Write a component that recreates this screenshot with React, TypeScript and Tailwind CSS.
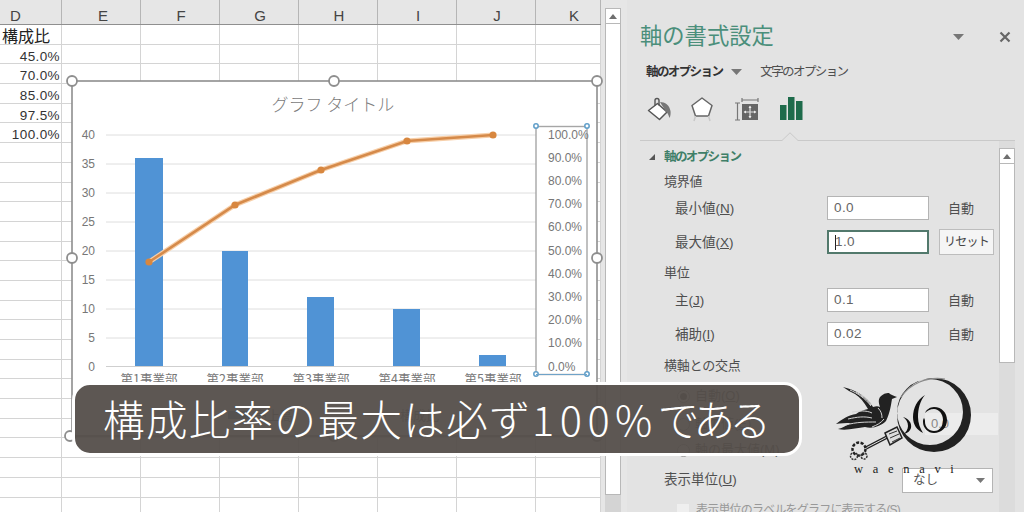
import React from "react";

const FONT = "font-['Liberation_Sans','Noto_Sans_CJK_JP',sans-serif]";
const JP = "font-['Noto_Sans_CJK_JP',sans-serif]";

const cols = [
  { l: "D", w: "w-[62px]", h: "justify-start pl-[10px]" },
  { l: "E", w: "w-[79px]", h: "justify-center pl-[4px]" },
  { l: "F", w: "w-[79px]", h: "justify-center pl-[2px]" },
  { l: "G", w: "w-[79px]", h: "justify-center pl-[2px]" },
  { l: "H", w: "w-[79px]", h: "justify-center pl-[2px]" },
  { l: "I", w: "w-[79px]", h: "justify-center pl-[2px]" },
  { l: "J", w: "w-[79px]", h: "justify-center pl-[2px]" },
  { l: "K", w: "w-[65px]", h: "justify-center pl-[12px]" },
];
const dVals = ["構成比", "45.0%", "70.0%", "85.0%", "97.5%", "100.0%"];
const rows = Array.from({ length: 25 }, (_, i) => i);

function Sheet() {
  return (
    <div className="flex h-full w-[601px] flex-col bg-white">
      <div className="flex h-[25px] shrink-0 border-b border-[#8f8f8f] bg-[#e6e6e6]">
        {cols.map((c) => (
          <div key={c.l} className={`${c.w} ${c.h} flex items-center border-r border-[#b5b5b5] pt-[7px] text-[15px] leading-none text-[#444]`}>
            {c.l}
          </div>
        ))}
      </div>
      {rows.map((r) => (
        <div key={r} className="flex h-[19.7px] shrink-0 border-b border-[#d4d4d4]">
          {cols.map((c, i) => (
            <div key={c.l} className={`${c.w} border-r border-[#d4d4d4] pt-[2px] leading-[19px] ${i === 0 ? "pr-[1px]" : ""}`}>
              {i === 0 && r < 6 ? (
                r === 0 ? (
                  <span className="block whitespace-nowrap pl-[2px] text-[16px] text-[#222]">{dVals[r]}</span>
                ) : (
                  <span className="block text-right text-[13.5px] tracking-[0.4px] text-[#333]">{dVals[r]}</span>
                )
              ) : null}
            </div>
          ))}
        </div>
      ))}
    </div>
  );
}

function Handle({ x, y }: { x: number; y: number }) {
  return <circle cx={x} cy={y} r={5} fill="#fff" stroke="#8e8e8e" strokeWidth={1.8} />;
}

function Chart() {
  const grid = [135, 164, 193, 222, 251, 280, 309, 338];
  const bars = [
    [135, 28, 158],
    [222, 26, 251],
    [307, 27, 297],
    [393, 27, 309],
    [479, 27, 355],
  ];
  const pts = [
    [149, 262],
    [235, 205],
    [321, 170],
    [407, 141],
    [493, 135],
  ];
  const line = pts.map((p) => p.join(",")).join(" ");
  const left = ["40", "35", "30", "25", "20", "15", "10", "5", "0"];
  const right = ["100.0%", "90.0%", "80.0%", "70.0%", "60.0%", "50.0%", "40.0%", "30.0%", "20.0%", "10.0%", "0.0%"];
  return (
    <svg className="absolute left-0 top-0" width="1024" height="512" viewBox="0 0 1024 512">
      <rect x="72" y="81" width="525" height="355" fill="#fff" stroke="#8e8e8e" strokeWidth="1.6" />
      <text x="333" y="111" textAnchor="middle" fontSize="17" fill="#7b7b7b" fontFamily="Noto Sans CJK JP, sans-serif" fontWeight="300">
        グラフ タイトル
      </text>
      {grid.map((y) => (
        <line key={y} x1="106" x2="536" y1={y} y2={y} stroke="#dedede" strokeWidth="1" />
      ))}
      <line x1="106" x2="536" y1="366.5" y2="366.5" stroke="#cfcfcf" />
      {bars.map(([x, w, t]) => (
        <rect key={x} x={x} y={t} width={w} height={366 - t} fill="#5093d5" />
      ))}
      <polyline points={line} fill="none" stroke="#f7cfa9" strokeWidth="5" />
      <polyline points={line} fill="none" stroke="#d58a4a" strokeWidth="2.6" />
      {pts.map(([x, y]) => (
        <circle key={x} cx={x} cy={y} r="3.6" fill="#d8873f" />
      ))}
      {left.map((t, i) => (
        <text key={t} x="95" y={139 + i * 29} textAnchor="end" fontSize="12" fill="#777" fontFamily="Liberation Sans, sans-serif">
          {t}
        </text>
      ))}
      <rect x="536" y="126.5" width="51" height="248" fill="#fff" stroke="#a6a6a6" strokeWidth="1.4" />
      {right.map((t, i) => (
        <text key={t} x={548} y={138.5 + i * 23.2} fontSize="12" fill="#777" fontFamily="Liberation Sans, sans-serif">
          {t}
        </text>
      ))}
      {[
        [536, 126],
        [587, 126],
        [536, 374],
        [587, 374],
      ].map(([x, y]) => (
        <circle key={x + "-" + y} cx={x} cy={y} r="2.2" fill="#fff" stroke="#5f9ec9" strokeWidth="1.5" />
      ))}
      <line x1="536" x2="587" y1="374.5" y2="374.5" stroke="#6fa3c9" strokeWidth="1.2" />
      {[149, 235, 321, 407, 493].map((x, i) => (
        <text key={x} x={x} y="384" fontSize="12.5" fill="#777" textAnchor="middle" fontFamily="Noto Sans CJK JP, sans-serif">
          第{i + 1}事業部
        </text>
      ))}
      <rect x="228" y="411" width="22" height="8" fill="#4e82b8" />
      <text x="254" y="420" fontSize="13" fill="#666" fontFamily="Noto Sans CJK JP, sans-serif">売上高</text>
      <line x1="365" x2="395" y1="415" y2="415" stroke="#d58a4a" strokeWidth="2.5" />
      <text x="400" y="420" fontSize="13" fill="#666" fontFamily="Noto Sans CJK JP, sans-serif">構成比</text>
      <Handle x={72} y={81} />
      <Handle x={334} y={81} />
      <Handle x={597} y={81} />
      <Handle x={72} y={258} />
      <Handle x={597} y={258} />
      <Handle x={70} y={436} />
      <Handle x={334} y={436} />
      <Handle x={597} y={436} />
    </svg>
  );
}

function UpButton() {
  return (
    <div className="flex h-[16px] w-[16px] shrink-0 items-center justify-center border border-[#b8b8b8] bg-white">
      <svg width="8" height="5" viewBox="0 0 8 5">
        <path d="M4 0 8 5H0z" fill="#6f6f6f" />
      </svg>
    </div>
  );
}

function SheetScroll() {
  return (
    <div className="ml-[4px] flex h-full w-[17px] shrink-0 flex-col">
      <div className="h-[8px] shrink-0" />
      <UpButton />
      <div className="h-[471px] w-[16px] shrink-0 border-x border-b border-[#b8b8b8] bg-white" />
      <div className="w-[16px] flex-1 bg-[#d4d4d4]" />
    </div>
  );
}

function PaintIcon() {
  return (
    <svg width="26" height="26" viewBox="0 0 26 26">
      <path d="M11.5 7.5 21 16l-7.5 7.5L2.5 14.5z" fill="#fff" stroke="#555" strokeWidth="1.5" strokeLinejoin="round" />
      <path d="M9 9.5V4.5a2 2 0 0 1 4 0v5" fill="none" stroke="#555" strokeWidth="1.4" />
      <path d="M14 6c5 0 9.500 3 10.500 9 .3 2.500 0 5-1 7-1-3-1.500-5-4-7z" fill="#777" />
    </svg>
  );
}

function PentagonIcon() {
  return (
    <svg width="24" height="26" viewBox="0 0 24 26">
      <path d="M12 2 22 9.500 18.500 20H5.500L2 9.500z" fill="#fff" stroke="#666" strokeWidth="1.5" strokeLinejoin="round" />
      <path d="M5.500 20 4 25M18.500 20 20 25" stroke="#c8c8c8" strokeWidth="1.500" fill="none" />
    </svg>
  );
}

function SizeIcon() {
  return (
    <svg width="25" height="26" viewBox="0 0 25 26">
      <path d="M8 2V6M24 2V6M8 4H24M1 7H6M3.500 7V24M1 24H6" stroke="#777" strokeWidth="1.2" fill="none" />
      <rect x="8" y="8" width="16" height="16" fill="#666" />
      <path d="M16 10.500V21.500M10.500 16H21.500" stroke="#ddd" strokeWidth="1.200" />
      <path d="M16 9.500 14.500 12H17.500zM16 22.500 14.500 20H17.500zM9.500 16 12 14.500V17.500zM22.500 16 20 14.500V17.500z" fill="#eee" />
    </svg>
  );
}

function BarsIcon() {
  return (
    <svg width="23" height="24" viewBox="0 0 23 24">
      <rect x="0" y="8" width="6.500" height="15" fill="#1e6b4b" />
      <rect x="8" y="0" width="6.500" height="23" fill="#1e6b4b" />
      <rect x="16" y="4" width="6.500" height="19" fill="#1e6b4b" />
    </svg>
  );
}

function Field({ v, focus }: { v: string; focus?: boolean }) {
  return (
    <div className={`flex h-[24px] w-[102px] shrink-0 items-center bg-white pl-[6px] text-[13.5px] tracking-[0.4px] text-[#666] ${focus ? "border-2 border-[#52796c]" : "border border-[#b4b4b4]"}`}>
      {focus ? <span className="mr-[-1px] h-[15px] w-[1px] bg-[#222]" /> : null}
      {v}
    </div>
  );
}

function UL({ c }: { c: string }) {
  return <span className="underline">{c}</span>;
}

function ValRow({ label, v, mt, focus, reset }: { label: React.ReactNode; v: string; mt: string; focus?: boolean; reset?: boolean }) {
  return (
    <div className={`flex h-[24px] items-center pl-[48px] ${mt}`}>
      <div className="w-[152px] shrink-0 pt-[2px] text-[13.5px] text-[#4f4f4f]">{label}</div>
      <Field v={v} focus={focus} />
      {reset ? (
        <div className="ml-[10px] flex h-[26px] w-[55px] shrink-0 items-center justify-center border border-[#bdbdbd] bg-[#f5f5f5] text-[12px] tracking-[-0.8px] text-[#444]">リセット</div>
      ) : (
        <div className="ml-[19px] pt-[2px] text-[13px] text-[#4f4f4f]">自動</div>
      )}
    </div>
  );
}

function Heading({ t, mt }: { t: string; mt: string }) {
  return <div className={`h-[20px] pl-[37px] text-[13px] leading-[22px] tracking-[-0.2px] text-[#4f4f4f] ${mt}`}>{t}</div>;
}

function Radio({ on }: { on?: boolean }) {
  return (
    <span className="flex h-[13px] w-[13px] shrink-0 items-center justify-center rounded-full border border-[#999] bg-white">
      {on ? <span className="h-[7px] w-[7px] rounded-full bg-[#555]" /> : null}
    </span>
  );
}

function Panel() {
  return (
    <div className="relative ml-[5px] flex h-full flex-1 flex-col bg-[#e3e3e3]">
      <div className="mt-[22px] flex h-[30px] items-center pl-[13px] pr-[13px]">
        <div className="flex-1 text-[22.3px] leading-[30px] text-[#4b8f7b]">軸の書式設定</div>
        <svg className="mr-[35px]" width="11" height="6" viewBox="0 0 11 6">
          <path d="M0 0H11L5.500 6z" fill="#777" />
        </svg>
        <svg width="12" height="12" viewBox="0 0 12 12">
          <path d="M1.500 1.500 10.500 10.500M10.500 1.500 1.500 10.500" stroke="#666" strokeWidth="2.200" />
        </svg>
      </div>
      <div className="mt-[10px] flex h-[20px] items-center pl-[19px]">
        <span className="text-[12.5px] font-bold tracking-[-1.6px] text-[#333]">軸のオプション</span>
        <svg className="ml-[9px]" width="11" height="6" viewBox="0 0 11 6">
          <path d="M0 0H11L5.500 6z" fill="#777" />
        </svg>
        <span className="ml-[18px] text-[12.5px] tracking-[-1.6px] text-[#4f4f4f]">文字のオプション</span>
      </div>
      <div className="mt-[14px] flex h-[26px] items-center pl-[19px]">
        <PaintIcon />
        <span className="ml-[18px]"><PentagonIcon /></span>
        <span className="ml-[20px]"><SizeIcon /></span>
        <span className="ml-[21px]"><BarsIcon /></span>
      </div>
      <div className="relative ml-[13px] mr-[9px] mt-[18px] h-[1px] bg-[#c9c9c9]">
        <svg className="absolute left-[141px] top-[-8px]" width="18" height="9" viewBox="0 0 18 9">
          <path d="M0 8.500H1L9 .8 17 8.500H18V9H0z" fill="#e3e3e3" />
          <path d="M0 8.500H1L9 .8 17 8.500H18" fill="none" stroke="#c9c9c9" />
        </svg>
      </div>
      <div className="flex min-h-0 flex-1 overflow-hidden">
        <div className="w-[372px] shrink-0 pt-[6px]">
          <div className="flex h-[20px] items-center pl-[21px]">
            <svg width="8" height="8" viewBox="0 0 8 8">
              <path d="M7 1V7H1z" fill="#555" />
            </svg>
            <span className="ml-[8px] text-[12.5px] font-bold tracking-[-1.6px] text-[#3f7f68]">軸のオプション</span>
          </div>
          <Heading t="境界値" mt="mt-[4px]" />
          <ValRow label={<>最小値(<UL c="N" />)</>} v="0.0" mt="mt-[5px]" />
          <ValRow label={<>最大値(<UL c="X" />)</>} v="1.0" mt="mt-[10px]" focus reset />
          <Heading t="単位" mt="mt-[8px]" />
          <ValRow label={<>主(<UL c="J" />)</>} v="0.1" mt="mt-[6px]" />
          <ValRow label={<>補助(<UL c="I" />)</>} v="0.02" mt="mt-[10px]" />
          <Heading t="横軸との交点" mt="mt-[9px]" />
          <div className="mt-[11px] flex h-[20px] items-center gap-[5px] pl-[50px] text-[13px] text-[#4f4f4f]">
            <Radio on />
            <span>自動(<UL c="O" />)</span>
          </div>
          <div className="mt-[7px] flex h-[22px] items-center gap-[5px] pl-[50px] text-[13px] text-[#4f4f4f]">
            <Radio />
            <span className="w-[225px] shrink-0">軸の値(<UL c="E" />)</span>
            <div className="flex h-[22px] w-[73px] shrink-0 items-center bg-[#ececec] pl-[6px] text-[13px] text-[#888]">0.0</div>
          </div>
          <div className="mt-[5px] flex h-[20px] items-center gap-[5px] pl-[50px] text-[13px] text-[#4f4f4f]">
            <Radio />
            <span>軸の最大値(<UL c="M" />)</span>
          </div>
          <div className="mt-[8px] flex h-[25px] items-center pl-[37px] text-[13.5px] text-[#4f4f4f]">
            <span className="w-[238px] shrink-0">表示単位(<UL c="U" />)</span>
            <div className="flex h-[25px] w-[91px] shrink-0 items-center justify-between border border-[#b4b4b4] bg-white pl-[10px] pr-[7px] text-[12.500px] text-[#555]">
              なし
              <svg width="9" height="5" viewBox="0 0 9 5">
                <path d="M0 0H9L4.500 5z" fill="#777" />
              </svg>
            </div>
          </div>
          <div className="mt-[10px] flex h-[14px] items-center pl-[50px] text-[12px] tracking-[-0.8px] text-[#999]">
            <span className="h-[12px] w-[12px] shrink-0 bg-[#efefef]" />
            <span className="ml-[7px] whitespace-nowrap">表示単位のラベルをグラフに表示する(<UL c="S" />)</span>
          </div>
        </div>
        <div className="flex h-full w-[16px] shrink-0 flex-col bg-[#dcdcdc] pt-[7px]">
          <UpButton />
          <div className="h-[199px] w-[16px] shrink-0 border-x border-b border-[#b8b8b8] bg-white" />
        </div>
      </div>
    </div>
  );
}

function Logo() {
  return (
    <div className="absolute left-[836px] top-[372px] h-[104px] w-[136px]">
      <svg className="absolute left-0 top-0" width="136" height="94" viewBox="836 372 136 94">
        <path fillRule="evenodd" d="M934 378a37 37 0 1 1 0 74 37 37 0 0 1 0-74zM930 379a33 33 0 1 0 0 66 33 33 0 0 0 0-66z" fill="#222" />
        <path d="M901 397c9-13 26-21 44-18" fill="none" stroke="#8a8a8a" strokeWidth="1.2" />
        <path d="M903 417c6 2 9 6 8 11-1 3-3 5-7 6 2-2 4-5 4-8 0-4-2-7-5-9z" fill="#111" />
        <path d="M925 395c-8 5-12 13-12 22 0 8 4 13 10 16-3-5-5-10-5-16 0-8 2-16 7-22z" fill="#111" />
        <path fillRule="evenodd" d="M934 407c8 0 13 6 13 13 0 8-6 13-13 13-6 0-11-5-11-11 0-1 0-3 1-4 1 1 1 3 1 4 0 5 4 9 9 9 6 0 9-5 9-11s-4-11-9-11c-4 0-7 2-9 4 1-3 5-6 9-6z" fill="#111" />
        <path d="M843 387c12 3 24 9 30 20 3-1 5-1 7 0-2-6-2-10 4-13 0 0 5-2 6 0 2 1 4 2 7 3l-5 2c-1 6-2 14-6 22-5 5-13 8-21 6-8 1-19 4-27 2 5-1 8-4 13-6-5 0-11 0-15 1 6-5 13-9 20-10 4-3 8-4 12-5-4-7-8-12-13-15-4-2-8-4-12-7z" fill="#222" />
        <path d="M850 390c7 3 15 8 21 16M856 392c5 3 11 7 15 13M862 395c4 3 7 6 10 10M852 412c7-1 14-2 20 1M848 419c9-2 16-3 24-1M846 425c10-3 20-3 30-3M872 427c5-2 9-4 12-8M878 408c3 3 4 6 4 10" stroke="#d4d4d4" strokeWidth="1" fill="none" />
        <path d="M866 448 889 436" stroke="#222" strokeWidth="3.500" fill="none" />
        <path d="M866 448 889 436" stroke="#ddd" strokeWidth="1" fill="none" />
        <path d="M885 433 897 427 902 438 890 445z" fill="#ddd" stroke="#222" strokeWidth="1.500" />
        <path d="M889 434 897 431M890 438 899 434M892 442 900 438" stroke="#333" strokeWidth="1" />
        <circle cx="859" cy="449" r="6.500" fill="none" stroke="#222" strokeWidth="2.500" strokeDasharray="3 1.500" />
        <circle cx="854" cy="456" r="3.500" fill="none" stroke="#333" strokeWidth="1.500" strokeDasharray="2 1" />
        <circle cx="864" cy="456" r="3" fill="none" stroke="#333" strokeWidth="1.500" strokeDasharray="2 1" />
      </svg>
      <div className="absolute left-[18px] top-[90px] whitespace-nowrap font-['Liberation_Serif',serif] text-[12.5px] leading-[14px] tracking-[9.7px] text-[#222]">waenavi</div>
    </div>
  );
}

export default function App() {
  return (
    <div className={`relative flex h-[512px] w-[1024px] overflow-hidden bg-[#e6e6e6] ${FONT}`}>
      <Sheet />
      <SheetScroll />
      <Panel />
      <Chart />
      <div className={`absolute left-[72px] top-[382px] flex h-[74px] w-[730px] items-center whitespace-nowrap rounded-[18px] border-[3px] border-[#ffffff] bg-[#544e4a]/95 pl-[28px] text-[41.5px] font-light leading-none tracking-[1.4px] text-white ${JP}`}>
        構成比率の最大は必ず<span className="tracking-[5.5px]">100%</span><span className="tracking-[-5.5px]">である</span>
      </div>
      <Logo />
    </div>
  );
}
